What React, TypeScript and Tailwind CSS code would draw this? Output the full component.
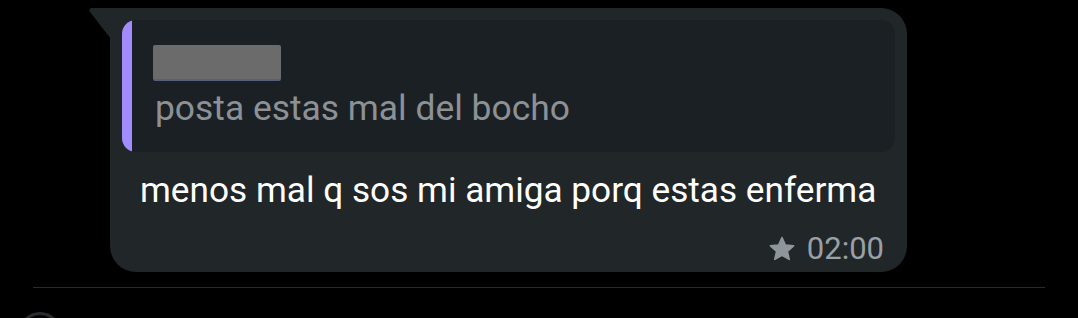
import React from "react";

const App = () => {
  return (
    <div className="relative w-[1078px] h-[318px] overflow-hidden bg-black font-['Roboto',sans-serif]">
      <div className="pt-2 pl-[110px]">
        <div className="relative w-[797px] h-[264px] bg-[#212629] rounded-tr-[26px] rounded-b-[26px]">
          {/* tail */}
          <svg
            className="absolute left-[-21px] top-0"
            width="22"
            height="32"
            viewBox="0 0 22 32"
          >
            <path d="M3 0 H22 V31 L1 4 Q-1 0 3 0 Z" fill="#212629" />
          </svg>

          <div className="pt-3 px-3">
            <div className="flex h-[132px] rounded-[14px] bg-[#1b2024] overflow-hidden">
              <div className="w-[10px] bg-[#a08cff] rounded-l-[14px]" />
              <div className="pl-[21px] pt-[25px]">
                <div className="w-[128px] h-[34px] bg-[#6b6b6c] rounded-[2px] shadow-[0_2px_0_#55607a] blur-[0.5px]" />
                <div className="mt-[9px] ml-[2px] text-[35.4px] leading-[40px] text-[#8c9196]">
                  posta estas mal del bocho
                </div>
              </div>
            </div>
          </div>

          <div className="pl-[30px] pt-[18px] text-[35.2px] leading-[40px] text-white">
            menos mal q sos mi amiga porq estas enferma
          </div>

          <div className="flex items-center justify-end gap-[11px] pr-[23px] pt-[21px] text-[#9aa0a5]">
            <svg width="28" height="28" viewBox="0 0 24 24">
              <path
                d="M12 2.2l2.9 6.4 7 .7-5.3 4.7 1.6 6.9L12 17.3l-6.2 3.6 1.6-6.9-5.3-4.7 7-.7z"
                fill="#8f969b"
                stroke="#8f969b"
                strokeWidth="1.4"
                strokeLinejoin="round"
              />
            </svg>
            <span className="text-[31px] leading-[36px]">02:00</span>
          </div>
        </div>
      </div>

      <div className="mt-[15px] mx-[33px] h-px bg-[#2b2b2b]" />

      <div className="absolute left-[18px] top-[312px] w-[44px] h-[44px] rounded-full border-[3px] border-[#2a2d30]" />
    </div>
  );
};

export default App;
